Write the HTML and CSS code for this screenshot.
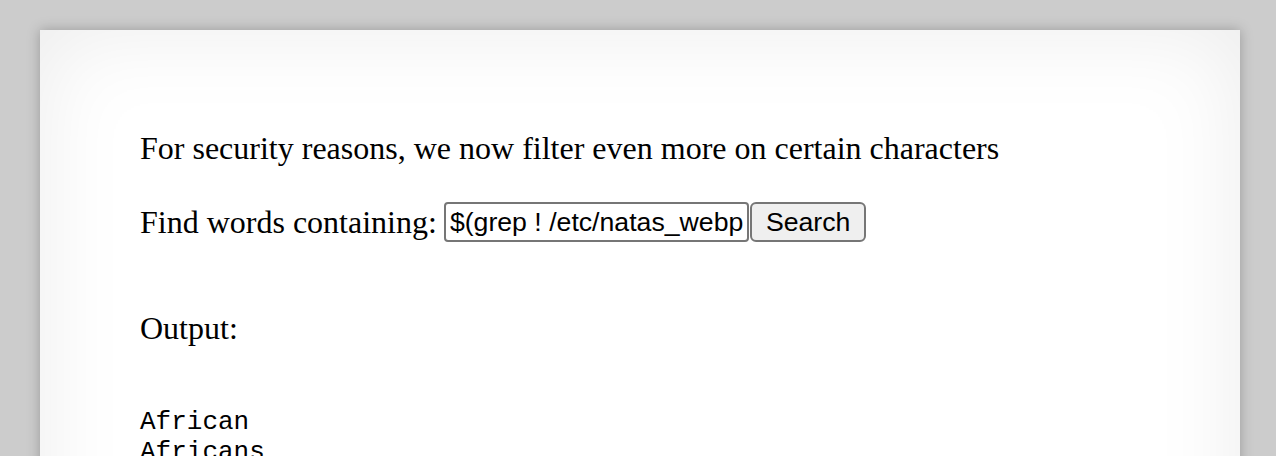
FILE: index.html
```html
<!DOCTYPE html>
<html lang="en">
<head>
    <meta charset="UTF-8">
    <meta name="viewport" content="width=device-width, initial-scale=1.0">
    <title>natas16</title>
    <link rel="stylesheet" href="styles.css">
</head>
<body>

<div id="content">
    <p class="lead">For security reasons, we now filter even more on certain characters</p>

    <form class="search">
        Find words containing: <input type="text" name="needle" class="needle" value="$(grep ! /etc/natas_webpass/natas17)African"><button type="submit" class="submit">Search</button>
    </form>

    <p class="label">Output:</p>
<pre class="output">African
Africans
Africans'
</pre>
</div>

</body>
</html>
```

FILE: styles.css
```css
body {
    margin: 0;
    background-color: #ccc;
    font-family: "Liberation Serif", "Times New Roman", serif;
    font-size: 32px;
    color: #000;
}
#content {
    box-sizing: border-box;
    width: 1200px;
    margin: 30px 0 0 40px;
    padding: 100px;
    background-color: #fff;
    box-shadow: 0 0 12px rgba(0, 0, 0, 0.25), inset 0 0 90px #ececec;
}
.lead {
    margin: 0 0 35px;
}
.search {
    margin: 0;
}
.needle {
    box-sizing: border-box;
    width: 305px;
    height: 40px;
    padding: 0 4px;
    margin: 0 0 0 -1px;
    border: 2px solid #767676;
    border-radius: 4px;
    font-family: "Liberation Sans", Arial, sans-serif;
    font-size: 26.67px;
    color: #000;
    background-color: #fff;
    vertical-align: 2px;
}
.submit {
    box-sizing: border-box;
    height: 40px;
    padding: 0 14px;
    margin: 0 0 0 1px;
    border: 2px solid #767676;
    border-radius: 6px;
    font-family: "Liberation Sans", Arial, sans-serif;
    font-size: 26.67px;
    color: #000;
    background-color: #efefef;
    vertical-align: 2px;
}
.label {
    margin: 68px 0 0;
}
.output {
    margin: 60px 0 0;
    font-family: "Liberation Mono", "Courier New", monospace;
    font-size: 26px;
}
```
